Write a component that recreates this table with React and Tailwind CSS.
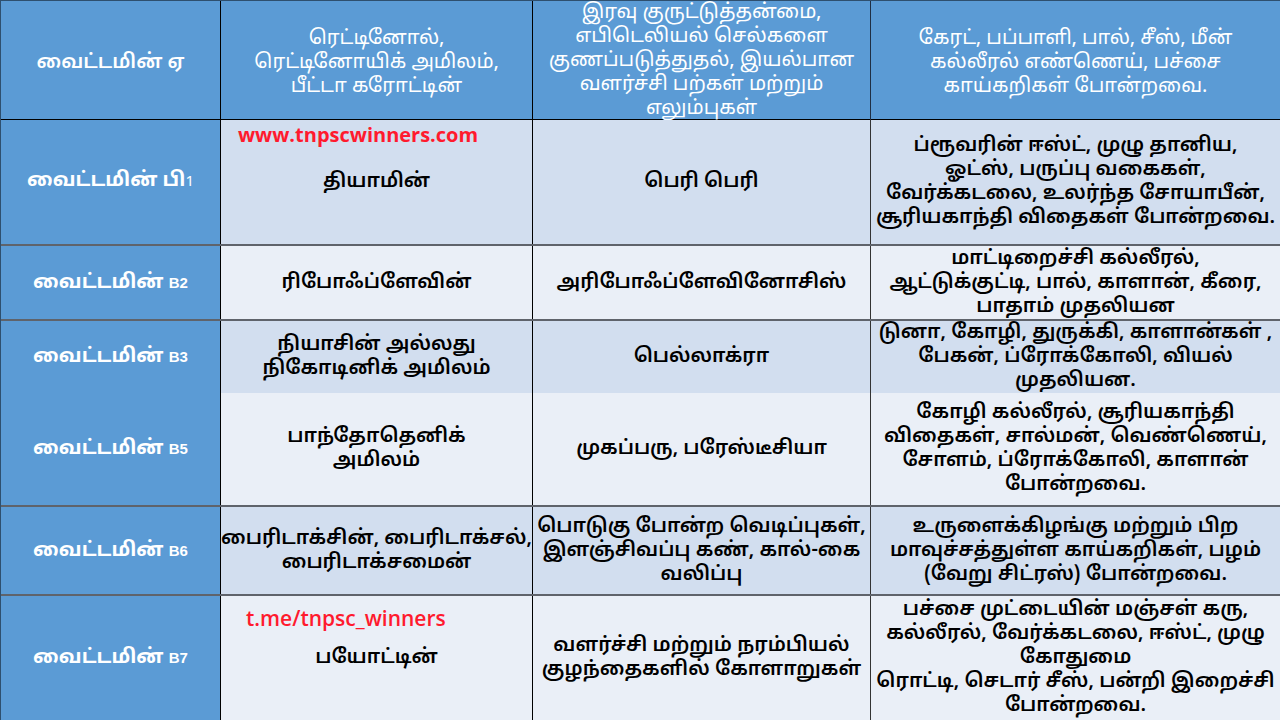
import React from "react";

const TAMIL = "font-['Noto_Sans_Tamil','Latha','Noto_Sans','DejaVu_Sans',sans-serif]";

const rows = [
  {
    name: "பி",
    sub: "1",
    h: "h-[126px]",
    bg: "bg-[#d2deef]",
    chem: ["தியாமின்"],
    disease: ["பெரி பெரி"],
    food: ["ப்ரூவரின் ஈஸ்ட், முழு தானிய,", "ஓட்ஸ், பருப்பு வகைகள்,", "வேர்க்கடலை, உலர்ந்த சோயாபீன்,", "சூரியகாந்தி விதைகள் போன்றவை."],
    mark: "www.tnpscwinners.com",
  },
  {
    sub: "B2",
    h: "h-[75px]",
    bg: "bg-[#eaeff7]",
    chem: ["ரிபோஃப்ளேவின்"],
    disease: ["அரிபோஃப்ளேவினோசிஸ்"],
    food: ["மாட்டிறைச்சி கல்லீரல்,", "ஆட்டுக்குட்டி, பால், காளான், கீரை,", "பாதாம் முதலியன"],
  },
  {
    sub: "B3",
    h: "h-[72px]",
    bg: "bg-[#d2deef]",
    chem: ["நியாசின் அல்லது", "நிகோடினிக் அமிலம்"],
    disease: ["பெல்லாக்ரா"],
    food: ["டுனா, கோழி, துருக்கி, காளான்கள் ,", "பேகன், ப்ரோக்கோலி, வியல்", "முதலியன."],
  },
  {
    sub: "B5",
    h: "h-[114px]",
    bg: "bg-[#eaeff7]",
    chem: ["பாந்தோதெனிக்", "அமிலம்"],
    disease: ["முகப்பரு, பரேஸ்டீசியா"],
    food: ["கோழி கல்லீரல், சூரியகாந்தி", "விதைகள், சால்மன், வெண்ணெய்,", "சோளம், ப்ரோக்கோலி, காளான்", "போன்றவை."],
  },
  {
    sub: "B6",
    h: "h-[89px]",
    bg: "bg-[#d2deef]",
    chem: ["பைரிடாக்சின், பைரிடாக்சல்,", "பைரிடாக்சமைன்"],
    disease: ["பொடுகு போன்ற வெடிப்புகள்,", "இளஞ்சிவப்பு கண், கால்-கை", "வலிப்பு"],
    food: ["உருளைக்கிழங்கு மற்றும் பிற", "மாவுச்சத்துள்ள காய்கறிகள், பழம்", "(வேறு சிட்ரஸ்) போன்றவை."],
  },
  {
    sub: "B7",
    h: "h-[124px]",
    bg: "bg-[#eaeff7]",
    chem: ["பயோட்டின்"],
    disease: ["வளர்ச்சி மற்றும் நரம்பியல்", "குழந்தைகளில் கோளாறுகள்"],
    food: ["பச்சை முட்டையின் மஞ்சள் கரு,", "கல்லீரல், வேர்க்கடலை, ஈஸ்ட், முழு", "கோதுமை", "ரொட்டி, செடார் சீஸ், பன்றி இறைச்சி", "போன்றவை."],
    mark: "t.me/tnpsc_winners",
    markThin: true,
  },
];

function Lines({ lines }) {
  return lines.map((l, i) => (
    <span key={i} className="block whitespace-nowrap">{l}</span>
  ));
}

export default function App() {
  return (
    <div className={`w-[1280px] h-[720px] overflow-hidden bg-[#5b9bd5] border-l border-t border-[#2e4f6e] ${TAMIL} text-[20px] leading-[24px]`}>
      {/* Header */}
      <div className="grid grid-cols-[220px_312px_338px_409px] h-[119px] border-b border-black text-white">
        <div className="flex items-center justify-center border-r border-black font-semibold">
          வைட்டமின் ஏ
        </div>
        <div className="flex items-center justify-center text-center border-r border-black">
          <div>
            <Lines lines={["ரெட்டினோல்,", "ரெட்டினோயிக் அமிலம்,", "பீட்டா கரோட்டின்"]} />
          </div>
        </div>
        <div className="flex items-end justify-center text-center border-r border-[#1f2f44] pb-[4px]">
          <div>
            <Lines lines={["இரவு குருட்டுத்தன்மை,", "எபிடெலியல் செல்களை", "குணப்படுத்துதல், இயல்பான", "வளர்ச்சி பற்கள் மற்றும்", "எலும்புகள்"]} />
          </div>
        </div>
        <div className="flex items-center justify-center text-center">
          <div>
            <Lines lines={["கேரட், பப்பாளி, பால், சீஸ், மீன்", "கல்லீரல் எண்ணெய், பச்சை", "காய்கறிகள் போன்றவை."]} />
          </div>
        </div>
      </div>

      {rows.map((r, i) => (
        <div
          key={i}
          className={`grid grid-cols-[220px_312px_338px_409px] ${r.h} ${i < rows.length - 1 ? "border-b-2 border-[#5f636b]" : ""}`}
        >
          <div className="flex items-center justify-center bg-[#5b9bd5] border-r border-black text-white font-bold">
            <span>
              வைட்டமின்{" "}
              {r.name ? (
                <>
                  {r.name}
                  <span className="text-[15px] font-normal">{r.sub}</span>
                </>
              ) : (
                <span className="text-[15px] font-bold font-['Liberation_Sans',sans-serif]">{r.sub}</span>
              )}
            </span>
          </div>
          <div className={`relative flex items-center justify-center text-center text-black font-semibold border-r border-black ${r.bg}`}>
            {r.mark && (
              <span
                className={`absolute text-[#ff1a2e] font-['Open_Sans',sans-serif] leading-[28px] ${r.markThin ? "left-[25px] top-[8px] text-[21px] font-semibold" : "left-[17px] top-[1px] text-[20px] font-bold"}`}
              >
                {r.mark}
              </span>
            )}
            <div>
              <Lines lines={r.chem} />
            </div>
          </div>
          <div className={`flex items-center justify-center text-center text-black font-semibold border-r border-[#333] ${r.bg}`}>
            <div>
              <Lines lines={r.disease} />
            </div>
          </div>
          <div className={`flex items-center justify-center text-center text-black font-semibold ${r.bg}`}>
            <div>
              <Lines lines={r.food} />
            </div>
          </div>
        </div>
      ))}
    </div>
  );
}
